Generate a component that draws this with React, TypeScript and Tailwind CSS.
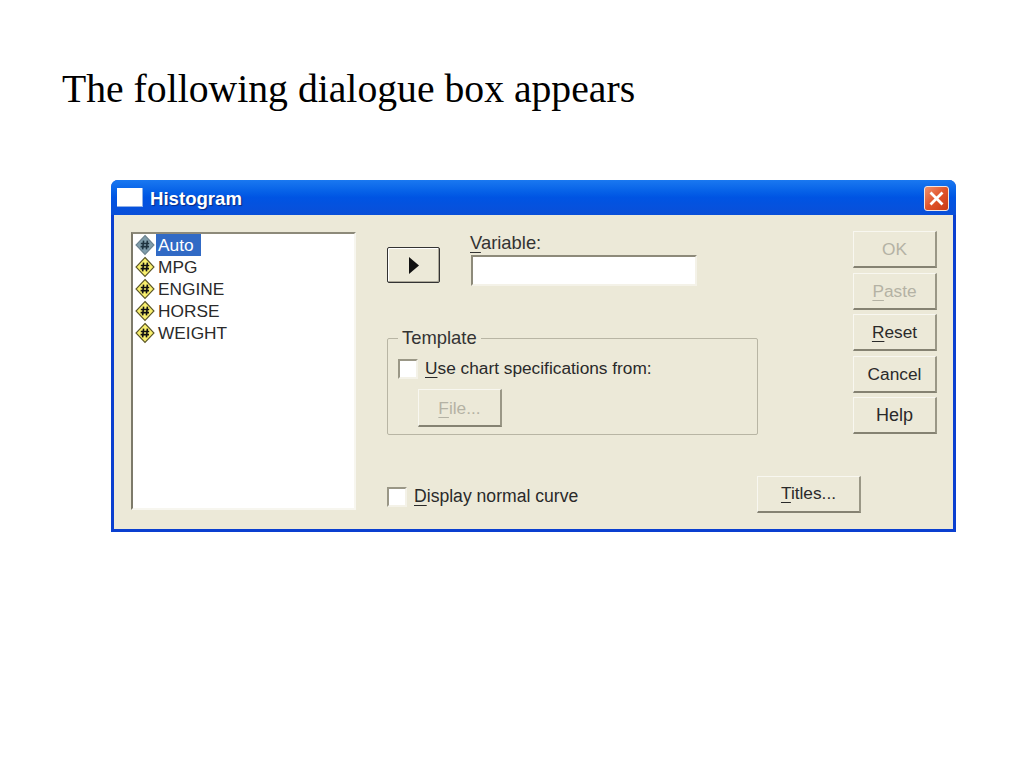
import type { ReactNode } from "react";

const fields = [
  { name: "Auto", selected: true },
  { name: "MPG" },
  { name: "ENGINE" },
  { name: "HORSE" },
  { name: "WEIGHT" },
];

function FieldIcon({ selected }: { selected?: boolean }) {
  return (
    <svg width="22" height="22" viewBox="0 0 22 22" className="shrink-0" aria-hidden>
      <path
        d="M11 1.5 20 11 11 20.5 2 11Z"
        fill={selected ? "#7f9dab" : "#f9f06e"}
        stroke={selected ? "#6b828f" : "#5a5526"}
        strokeWidth="1.1"
      />
      <path
        d="M9.6 6.6 8.6 15.4M13.4 6.6 12.4 15.4M6.8 9.5H15.2M6.6 12.6H15"
        stroke={selected ? "#1f3440" : "#111"}
        strokeWidth="1.6"
        fill="none"
      />
    </svg>
  );
}

function Key({ children }: { children: ReactNode }) {
  return <span className="underline underline-offset-[3px]">{children}</span>;
}

function WinButton({
  children,
  disabled,
  className,
}: {
  children: ReactNode;
  disabled?: boolean;
  className: string;
}) {
  return (
    <button
      type="button"
      className={`flex items-center justify-center border-b-2 border-l border-r-2 border-t border-t-[#f8f7f0] border-l-[#f8f7f0] border-r-[#9a9786] border-b-[#858272] bg-[#ece9d8] ${
        disabled ? "text-[#b4b2a4]" : "text-[#2a2a2a]"
      } ${className}`}
    >
      {children}
    </button>
  );
}

function CheckBox() {
  return (
    <span className="mt-[2px] block h-[20px] w-[20px] shrink-0 border-2 border-t-[#9a9786] border-l-[#9a9786] border-r-[#f4f2e8] border-b-[#f4f2e8] bg-white" />
  );
}

export default function App() {
  return (
    <div className="h-[768px] w-[1024px] overflow-hidden bg-white">
      <h1 className="pl-[62px] pt-[67px] font-['Liberation_Serif',serif] text-[39.7px] leading-[44px] text-black">
        The following dialogue box appears
      </h1>

      <div className="ml-[111px] mt-[69px] h-[352px] w-[845px] overflow-hidden rounded-t-[7px] bg-[#0a3fd0] font-['Liberation_Sans',sans-serif] text-[17.3px] leading-[22px] text-[#2a2a2a]">
        <div className="flex h-[35px] items-center justify-between bg-gradient-to-b from-[#1a78f0] via-[#0054e3] to-[#0a4fd8] pl-[6px] pr-[7px]">
          <div className="flex items-center gap-[7px]">
            <span className="block h-[19px] w-[26px] border-b border-r border-[#8fb0e8] bg-white" />
            <span className="pt-[2px] text-[18.6px] font-bold text-white [text-shadow:1px_1px_1px_#0a2a80]">
              Histogram
            </span>
          </div>
          <span className="mt-[2px] flex h-[25px] w-[25px] items-center justify-center rounded-[3px] border border-[#f4e4dc] bg-gradient-to-br from-[#f0906a] via-[#e0532a] to-[#c83a14]">
            <svg width="17" height="17" viewBox="0 0 17 17" aria-hidden>
              <path d="M2.5 2.5 14.5 14.5M14.5 2.5 2.5 14.5" stroke="#fff" strokeWidth="2.8" />
            </svg>
          </span>
        </div>

        <div className="mx-[3px] flex h-[314px] bg-[#ece9d8] pl-[17px] pt-[17px]">
          <div className="h-[278px] w-[225px] shrink-0 border-2 border-t-[#8d8a7a] border-l-[#7d7a6a] border-r-[#f7f6ef] border-b-[#f7f6ef] bg-white pl-[1px]">
            {fields.map((f) => (
              <div key={f.name} className="flex h-[22px] items-center">
                <FieldIcon selected={f.selected} />
                <span
                  className={
                    f.selected
                      ? "h-[22px] bg-[#316ac5] pl-[2px] pr-[7px] pt-px leading-[21px] text-white"
                      : "h-[22px] pl-[2px] pt-px leading-[21px]"
                  }
                >
                  {f.name}
                </span>
              </div>
            ))}
          </div>

          <div className="ml-[31px] w-[474px] shrink-0">
            <div className="flex">
              <div className="w-[371px] shrink-0">
                <div className="flex">
                  <button
                    type="button"
                    className="mt-[15px] flex h-[36px] w-[53px] items-center justify-center rounded-[2px] border border-[#333] bg-[#ece9d8] shadow-[inset_-1px_-1px_0_#aca899,inset_1px_1px_0_#fff]"
                  >
                    <svg width="10" height="17" viewBox="0 0 10 17" aria-hidden>
                      <path d="M0 0 10 8.5 0 17Z" fill="#111" />
                    </svg>
                  </button>
                  <div className="ml-[30px]">
                    <div className="text-[18.4px] text-[#333]">
                      <Key>V</Key>ariable:
                    </div>
                    <div className="ml-px mt-px h-[31px] w-[226px] border-2 border-t-[#8d8a7a] border-l-[#8d8a7a] border-r-[#f4f2e8] border-b-[#f4f2e8] bg-white" />
                  </div>
                </div>

                <fieldset className="mt-[42px] h-[107px] rounded-[2px] border border-[#b8b5a4] pl-[10px] pr-2">
                  <legend className="px-[4px] text-[18.4px] leading-[20px] text-[#333]">Template</legend>
                  <div className="mt-[9px] flex items-center gap-[7px]">
                    <CheckBox />
                    <span>
                      <Key>U</Key>se chart specifications from:
                    </span>
                  </div>
                  <WinButton disabled className="ml-[20px] mt-[10px] h-[38px] w-[84px]">
                    <span>
                      <Key>F</Key>ile...
                    </span>
                  </WinButton>
                </fieldset>
              </div>

              <div className="-mr-[84px] -mt-px ml-[95px] flex w-[84px] shrink-0 flex-col gap-[4.6px]">
                <WinButton disabled className="h-[37px] w-[84px]">OK</WinButton>
                <WinButton disabled className="h-[37px] w-[84px]">
                  <span>
                    <Key>P</Key>aste
                  </span>
                </WinButton>
                <WinButton className="h-[37px] w-[84px]">
                  <span>
                    <Key>R</Key>eset
                  </span>
                </WinButton>
                <WinButton className="h-[37px] w-[84px]">Cancel</WinButton>
                <WinButton className="h-[37px] w-[84px]">
                  <span className="text-[18px]">Help</span>
                </WinButton>
              </div>
            </div>

            <div className="mt-[41px] flex items-center justify-between">
              <div className="mt-[3px] flex items-center gap-[7px]">
                <CheckBox />
                <span className="text-[17.6px]">
                  <Key>D</Key>isplay normal curve
                </span>
              </div>
              <WinButton className="h-[37px] w-[104px]">
                <span className="-mt-[2px]">
                  <Key>T</Key>itles...
                </span>
              </WinButton>
            </div>
          </div>
        </div>
      </div>
    </div>
  );
}
